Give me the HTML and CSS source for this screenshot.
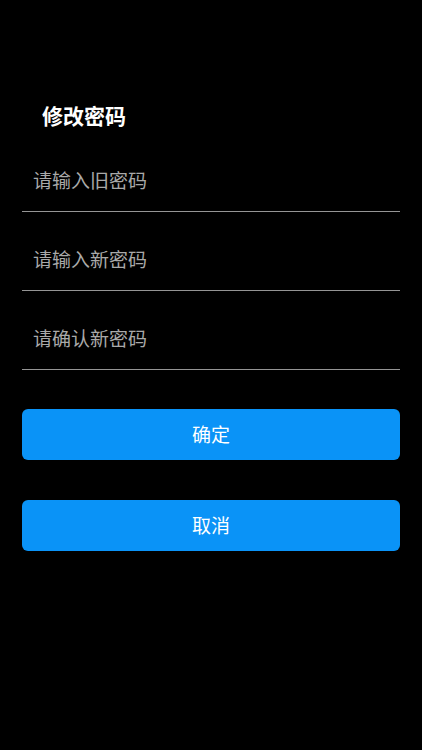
FILE: index.html
```html
<!DOCTYPE html>
<html lang="zh-CN">
<head>
<meta charset="utf-8">
<title>修改密码</title>
<link rel="stylesheet" href="styles.css">
</head>
<body>
<div class="page">
  <h1 class="title">修改密码</h1>
  <form class="form">
    <input class="field" type="password" placeholder="请输入旧密码">
    <input class="field" type="password" placeholder="请输入新密码">
    <input class="field" type="password" placeholder="请确认新密码">
    <div class="actions">
      <button type="button" class="btn">确定</button>
      <button type="button" class="btn">取消</button>
    </div>
  </form>
</div>
</body>
</html>
```
FILE: styles.css
```css
html, body {
  margin: 0;
  padding: 0;
  background: #000;
  height: 100%;
}
body {
  font-family: "Noto Sans CJK SC", "Noto Sans", sans-serif;
  color: #fff;
}
.page {
  padding: 101px 22px 0 22px;
}
.title {
  margin: 0 0 0 20px;
  font-size: 21px;
  line-height: 28px;
  font-weight: 700;
  color: #fff;
}
.form {
  display: flex;
  flex-direction: column;
  gap: 18px;
  margin-top: 22px;
}
.field {
  display: block;
  box-sizing: border-box;
  width: 100%;
  height: 61px;
  padding: 0 0 4px 11px;
  margin: 0;
  border: none;
  border-bottom: 1px solid #959595;
  background: transparent;
  color: #fff;
  font-family: inherit;
  font-size: 19px;
  line-height: 56px;
  outline: none;
}
.field::placeholder {
  color: #a9a9a9;
  opacity: 1;
}
.actions {
  display: flex;
  flex-direction: column;
  gap: 40px;
  margin-top: 21px;
}
.btn {
  display: block;
  width: 100%;
  height: 51px;
  border: none;
  border-radius: 6px;
  background: #0a93f7;
  color: #fff;
  font-family: inherit;
  font-size: 19px;
  padding: 0 0 3px 0;
}
```
